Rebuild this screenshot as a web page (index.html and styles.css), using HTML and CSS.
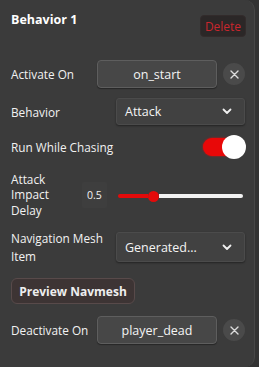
FILE: index.html
```html
<!DOCTYPE html>
<html>
<head>
<meta charset="utf-8">
<link rel="stylesheet" href="styles.css">
</head>
<body>
<div class="panel">
  <div class="header">
    <div class="title">Behavior 1</div>
    <button class="delete">Delete</button>
  </div>

  <div class="row r-activate">
    <div class="label">Activate On</div>
    <button class="event">on_start</button>
    <span class="clear"><svg width="9" height="9" viewBox="0 0 9 9"><path d="M1 1L8 8M8 1L1 8" stroke="#dcdcdc" stroke-width="1.4" stroke-linecap="round"/></svg></span>
  </div>

  <div class="row r-behavior">
    <div class="label">Behavior</div>
    <div class="select"><span>Attack</span><svg width="10" height="7" viewBox="0 0 10 7"><path d="M1.5 1.5L5 5L8.5 1.5" fill="none" stroke="#f0f0f0" stroke-width="1.8" stroke-linecap="round" stroke-linejoin="round"/></svg></div>
  </div>

  <div class="row r-run">
    <div class="label">Run While Chasing</div>
    <div class="toggle"><span class="track"></span><span class="knob"></span></div>
  </div>

  <div class="row r-attack">
    <div class="label multi">Attack<br>Impact<br>Delay</div>
    <div class="value">0.5</div>
    <div class="slider"><span class="fill"></span><span class="thumb"></span><span class="rest"></span></div>
  </div>

  <div class="row r-nav">
    <div class="label multi2">Navigation Mesh<br>Item</div>
    <div class="select tall"><span>Generated...</span><svg width="10" height="7" viewBox="0 0 10 7"><path d="M1.5 1.5L5 5L8.5 1.5" fill="none" stroke="#f0f0f0" stroke-width="1.8" stroke-linecap="round" stroke-linejoin="round"/></svg></div>
  </div>

  <div class="row r-preview">
    <button class="preview">Preview Navmesh</button>
  </div>

  <div class="row r-deactivate">
    <div class="label">Deactivate On</div>
    <button class="event">player_dead</button>
    <span class="clear"><svg width="9" height="9" viewBox="0 0 9 9"><path d="M1 1L8 8M8 1L1 8" stroke="#dcdcdc" stroke-width="1.4" stroke-linecap="round"/></svg></span>
  </div>
</div>
</body>
</html>
```

FILE: styles.css
```css
html, body {
  margin: 0;
  padding: 0;
  background: #333333;
  width: 259px;
  height: 367px;
  overflow: hidden;
}
.panel {
  box-sizing: border-box;
  width: 255px;
  height: 367px;
  background: #3b3b3b;
  border-right: 1px solid #474747;
  border-radius: 0 10px 10px 0;
  padding: 0 8px 0 11px;
  font-family: "Open Sans", "Noto Sans", sans-serif;
  font-size: 11.8px;
  color: #f2f2f2;
}
.header {
  height: 44px;
  display: flex;
  justify-content: space-between;
  align-items: flex-start;
}
.title {
  margin-top: 11px;
  font-weight: 700;
  font-size: 12.5px;
  line-height: 18px;
  color: #ffffff;
}
.delete {
  margin-top: 15px;
  width: 46px;
  height: 22px;
  padding: 0;
  border: 1px solid #322b2b;
  border-radius: 4px;
  background: #2b2727;
  color: #c9262d;
  font-family: inherit;
  font-size: 12px;
}
.row {
  display: flex;
  align-items: center;
}
.label {
  line-height: 16px;
  white-space: nowrap;
}
.r-activate { margin-top: 16px; height: 28px; }
.r-behavior { margin-top: 10px; height: 27px; }
.r-run { margin-top: 10px; height: 24px; }
.r-attack { margin-top: 13px; height: 46px; }
.r-nav { margin-top: 12px; height: 34px; }
.r-preview { margin-top: 14px; height: 26px; }
.r-deactivate { margin-top: 12px; height: 28px; }

.r-activate .label, .r-deactivate .label { width: 86px; }
.event {
  box-sizing: border-box;
  width: 120px;
  height: 28px;
  padding: 0;
  border: 1px solid #5e5e5e;
  border-radius: 4px;
  background: #474747;
  color: #f4f4f4;
  font-family: inherit;
  font-size: 12.5px;
  box-shadow: 0 1px 1px rgba(0,0,0,0.35);
}
.clear {
  margin-left: 6px;
  width: 22px;
  height: 22px;
  border-radius: 50%;
  background: #4a4a4a;
  display: flex;
  align-items: center;
  justify-content: center;
}
.r-behavior .label, .r-nav .label { width: 105px; }
.select {
  box-sizing: border-box;
  width: 129px;
  height: 27px;
  padding: 0 12px 0 8px;
  background: #414141;
  border: 1px solid #4b4b4b;
  border-radius: 3px;
  box-shadow: 0 1px 2px rgba(0,0,0,0.4);
  display: flex;
  align-items: center;
  justify-content: space-between;
  font-size: 12.5px;
  color: #f4f4f4;
}
.select.tall { height: 30px; }
.r-run { justify-content: space-between; }
.toggle {
  position: relative;
  width: 44px;
  height: 24px;
}
.track {
  position: absolute;
  left: 1px;
  top: 3px;
  width: 36px;
  height: 18px;
  border-radius: 9px;
  background: #e80808;
  box-shadow: 0 0 2px #e80808;
}
.knob {
  position: absolute;
  right: 0;
  top: 0;
  width: 24px;
  height: 24px;
  border-radius: 50%;
  background: #ffffff;
}
.multi { width: 71px; line-height: 15.5px; }
.value {
  width: 25px;
  height: 26px;
  background: #3e3e3e;
  border-radius: 2px;
  font-size: 10.5px;
  display: flex;
  align-items: center;
  justify-content: center;
  margin-right: 11px;
}
.slider {
  display: flex;
  align-items: center;
  width: 125px;
  height: 12px;
  margin-top: 2px;
}
.fill {
  width: 30px;
  height: 4px;
  background: #e30a0a;
  border-radius: 2px 0 0 2px;
}
.thumb {
  width: 11px;
  height: 11px;
  border-radius: 50%;
  background: #e30a0a;
}
.rest {
  flex: 1;
  height: 4px;
  background: #f2f2f2;
  border-radius: 0 2px 2px 0;
}
.multi2 { line-height: 18px; }
.preview {
  box-sizing: border-box;
  width: 124px;
  height: 26px;
  padding: 0;
  border: 1px solid #584a4a;
  border-radius: 6px;
  background: #3d3434;
  color: #eeeeee;
  font-family: inherit;
  font-weight: 700;
  font-size: 12px;
}
```
